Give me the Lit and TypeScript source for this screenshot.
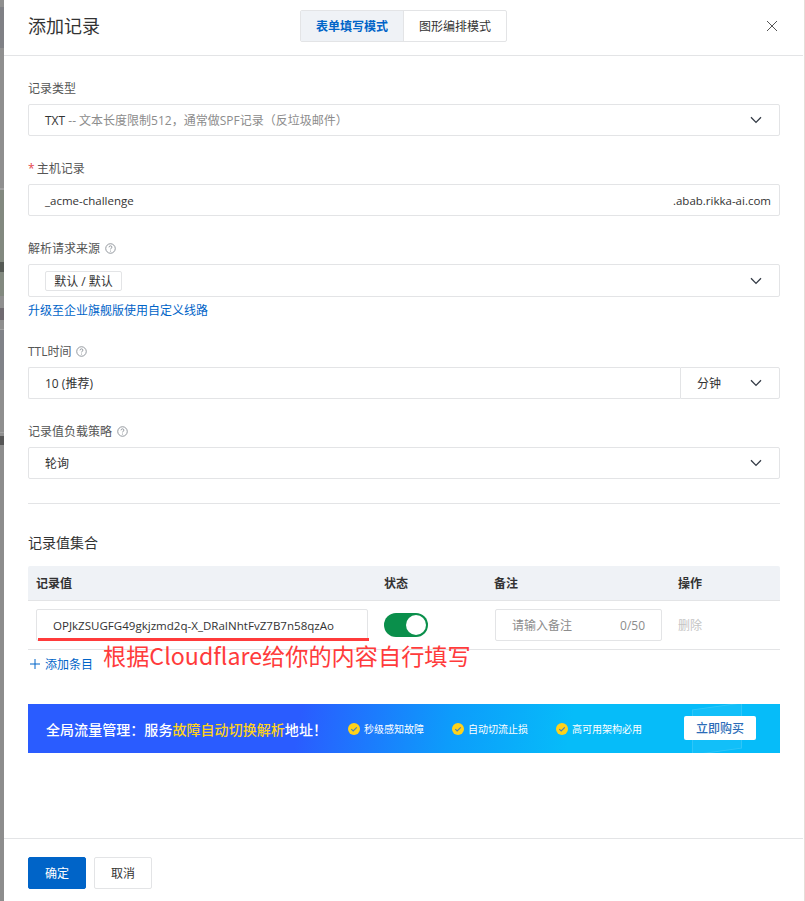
import { LitElement, html, css } from "lit";
import { customElement } from "lit/decorators.js";

const chevron = html`<svg class="chev" viewBox="0 0 12 8" width="12" height="8"><path d="M1 1.2 6 6.4 11 1.2" fill="none" stroke="#333a45" stroke-width="1.3"/></svg>`;
const help = html`<svg class="help" viewBox="0 0 12 12" width="11" height="11"><circle cx="6" cy="6" r="5.2" fill="none" stroke="#8a8f96" stroke-width="1"/><path d="M4.4 4.7C4.4 3.7 5.1 3.1 6 3.1s1.6.6 1.6 1.4c0 1.2-1.6 1.2-1.6 2.5" fill="none" stroke="#8a8f96" stroke-width="1"/><circle cx="6" cy="8.8" r=".6" fill="#8a8f96"/></svg>`;
const check = html`<svg class="check" viewBox="0 0 12 12" width="12" height="12"><circle cx="6" cy="6" r="6" fill="#ffd21a"/><path d="M3.3 6.1 5.2 8 8.8 4.3" fill="none" stroke="#4a7fb5" stroke-width="1.1"/></svg>`;

@customElement("app-root")
export class AppRoot extends LitElement {
  static styles = css`
    :host { display: block; width: 805px; height: 901px; overflow: hidden; background: #fff;
      font-family: "Open Sans", "Noto Sans CJK SC", sans-serif; font-size: 12px; color: #333; }
    * { box-sizing: border-box; }
    .page { display: flex; height: 901px; position: relative; }
    .strip { width: 4px; flex: none;
      background: linear-gradient(180deg,
        #8f8f8f 0 7px, #7f8085 7px 48px, #8f8f8f 48px 188px, #a0a0a0 188px 190px,
        #82897f 190px 262px, #555a55 262px 272px, #82897f 272px 296px, #8f8f8f 296px 308px,
        #6f6a70 308px 320px, #8f8f8f 320px 329px, #a0a0a0 329px 330px, #808288 330px 380px,
        #8f8f8f 380px 432px, #a0a0a0 432px 433px, #8f8f8f 433px 436px, #565656 436px 445px,
        #8d8d8d 445px 901px); }
    .panel { flex: 1; display: flex; flex-direction: column; min-width: 0; }
    .edge { width: 2px; flex: none; background: #fff; border-right: 1px solid #e6dcd8; }

    .head { height: 56px; flex: none; border-bottom: 1px solid #e3e4e6; position: relative;
      display: flex; align-items: center; justify-content: center; padding: 0 0 4px; }
    .title { position: absolute; left: 24px; top: 13px; font-size: 18px; line-height: 26px; color: #333; }
    .tabs { display: flex; height: 32px; border: 1px solid #e3e4e6; border-radius: 2px; margin-left: 0; margin-top: 1px; }
    .tab { width: 102px; display: flex; align-items: center; justify-content: center; font-size: 12px; color: #333; }
    .tab.on { width: 103px; background: #eff2f6; color: #0064c8; font-weight: 700; border-right: 1px solid #e3e4e6; }
    .close { position: absolute; left: 762px; top: 20px; }

    .body { flex: 1; padding: 22px 23px 0 24px; }
    .field { margin-bottom: 22px; }
    .field.tight { margin-bottom: 21px; }
    .label { height: 20px; line-height: 20px; padding-top: 1px; margin-bottom: 6px; font-size: 12px; color: #555; display: flex; align-items: center; gap: 5px; }
    .req { color: #e5484d; margin-right: -1px; }
    .ctl { height: 32px; border: 1px solid #e3e4e6; border-radius: 2px; display: flex; align-items: center; padding: 0 17px 0 16px; font-size: 12px; color: #333; background: #fff; }
    .ctl.tall { height: 33px; }
    .grow { flex: 1; min-width: 0; }
    .muted { color: #8c8c8c; }
    .latin { font-size: 11.5px; }
    .suffix { color: #333; margin-right: -9px; font-size: 11.5px; }
    .chip { height: 20px; border: 1px solid #e3e4e6; border-radius: 2px; padding: 0 8px; display: inline-flex; align-items: center; font-size: 12px; margin-top: 1px; width: 77px; white-space: nowrap; justify-content: center; }
    .link { display: block; height: 20px; line-height: 20px; padding-top: 1px; margin-top: 3px; color: #0064c8; font-size: 12px; }
    .ttl { display: flex; }
    .ttl .ctl.a { flex: 1; border-right: none; border-radius: 2px 0 0 2px; }
    .ttl .ctl.b { width: 100px; border-radius: 0 2px 2px 0; }
    .divider { height: 1px; background: #e3e4e6; margin: 24px 0 29px; }
    .section { height: 20px; line-height: 20px; font-size: 14px; color: #333; margin-bottom: 13px; }

    .grid { display: grid; grid-template-columns: 356px 110px 184px 102px; }
    .thead { height: 35px; background: #eff2f6; border-bottom: 1px solid #e3e4e6; border-radius: 2px 2px 0 0; align-items: center; font-weight: 700; font-size: 12px; color: #333; }
    .thead > div:first-child { padding-left: 8px; }
    .trow { height: 49px; border-bottom: 1px solid #e3e4e6; align-items: center; }
    .cell-input { width: 332px; height: 32px; margin-left: 8px; border: 1px solid #e3e4e6; border-radius: 2px; display: flex; align-items: center; padding-left: 16px; font-size: 11.55px; color: #333; white-space: nowrap; }
    .switch { width: 44px; height: 24px; border-radius: 12px; background: #0a8f4b; position: relative; }
    .switch::after { content: ""; position: absolute; right: 2px; top: 2px; width: 20px; height: 20px; border-radius: 50%; background: #fff; }
    .note { width: 167px; margin-left: 1px; height: 32px; border: 1px solid #e3e4e6; border-radius: 2px; display: flex; align-items: center; justify-content: space-between; padding: 0 16px; color: #8c8c8c; font-size: 12px; }
    .del { color: #c4c4c4; font-size: 12px; }
    .add { display: flex; align-items: center; gap: 5px; height: 20px; margin-top: 4px; padding-left: 2px; color: #0064c8; font-size: 12px; }

    .banner { margin-top: 30px; height: 49px; display: flex; align-items: center; position: relative; overflow: hidden; color: #fff;
      background: linear-gradient(100deg, #2a5cff 0%, #2a5cff 36%, #0d9cfb 56%, #06bcf9 72%, #06bcf9 100%); padding-left: 18px; }
    .btxt { font-size: 14px; font-weight: 500; letter-spacing: 0.05px; white-space: nowrap; width: 302px; flex: none; }
    .btxt b { color: #ffd21a; font-weight: 500; }
    .perk { display: flex; align-items: center; gap: 4px; font-size: 10px; white-space: nowrap; flex: none; }
    .p1 { width: 104px; } .p2 { width: 104px; }
    .p3 { width: 128px; }
    .buy { flex: none; width: 72px; height: 24px; background: #fff; border-radius: 2px; color: #2a6cb8; display: flex; align-items: center; justify-content: center; font-size: 12px; font-weight: 500; margin-top: -1px; position: relative; }
    .deco { position: absolute; left: 664px; top: 2px; width: 50px; height: 46px; border: 1px solid rgba(255,255,255,.12); background: rgba(255,255,255,.05); transform: skewY(-8deg); }

    .foot { height: 63px; flex: none; border-top: 1px solid #e3e4e6; padding: 18px 0 0 24px; display: flex; gap: 8px; align-items: flex-start; }
    .btn { width: 58px; height: 32px; border-radius: 2px; display: flex; align-items: center; justify-content: center; font-size: 12px; border: 1px solid #e3e4e6; color: #333; background: #fff; }
    .btn.pri { background: #0064c8; border-color: #0064c8; color: #fff; }

    .red-line { position: absolute; left: 38px; top: 638px; width: 331px; height: 3px; background: #ff3b3b; }
    .red-text { position: absolute; left: 103px; top: 640px; font-size: 23.2px; line-height: 30px; color: #ff3b3b; font-family: "Noto Sans CJK SC", sans-serif; white-space: nowrap; }
  `;

  render() {
    return html`
      <div class="page">
        <div class="strip"></div>
        <div class="panel">
          <div class="head">
            <div class="title">添加记录</div>
            <div class="tabs">
              <div class="tab on">表单填写模式</div>
              <div class="tab">图形编排模式</div>
            </div>
            <svg class="close" viewBox="0 0 12 12" width="12" height="12"><path d="M1 1 11 11M11 1 1 11" stroke="#555" stroke-width="1" fill="none"/></svg>
          </div>
          <div class="body">
            <div class="field">
              <div class="label">记录类型</div>
              <div class="ctl"><span class="grow"><span>TXT</span> <span class="muted">-- 文本长度限制512，通常做SPF记录（反垃圾邮件）</span></span>${chevron}</div>
            </div>
            <div class="field">
              <div class="label"><span><span class="req">*</span> 主机记录</span></div>
              <div class="ctl"><span class="grow latin">_acme-challenge</span><span class="suffix">.abab.rikka-ai.com</span></div>
            </div>
            <div class="field tight">
              <div class="label">解析请求来源 ${help}</div>
              <div class="ctl tall"><span class="grow"><span class="chip">默认 / 默认</span></span>${chevron}</div>
              <a class="link">升级至企业旗舰版使用自定义线路</a>
            </div>
            <div class="field">
              <div class="label">TTL时间 ${help}</div>
              <div class="ttl">
                <div class="ctl a"><span class="grow">10 (推荐)</span></div>
                <div class="ctl b"><span class="grow">分钟</span>${chevron}</div>
              </div>
            </div>
            <div class="field">
              <div class="label">记录值负载策略 ${help}</div>
              <div class="ctl"><span class="grow">轮询</span>${chevron}</div>
            </div>
            <div class="divider"></div>
            <div class="section">记录值集合</div>
            <div class="grid thead"><div>记录值</div><div>状态</div><div>备注</div><div>操作</div></div>
            <div class="grid trow">
              <div><div class="cell-input">OPJkZSUGFG49gkjzmd2q-X_DRaINhtFvZ7B7n58qzAo</div></div>
              <div><div class="switch"></div></div>
              <div><div class="note"><span>请输入备注</span><span>0/50</span></div></div>
              <div class="del">删除</div>
            </div>
            <div class="add"><svg viewBox="0 0 10 10" width="10" height="10"><path d="M5 0V10M0 5H10" stroke="#0064c8" stroke-width="1"/></svg>添加条目</div>
            <div class="banner">
              <div class="deco"></div>
              <div class="btxt">全局流量管理：服务<b>故障自动切换解析</b>地址！</div>
              <div class="perk p1">${check}秒级感知故障</div>
              <div class="perk p2">${check}自动切流止损</div>
              <div class="perk p3">${check}高可用架构必用</div>
              <div class="buy">立即购买</div>
            </div>
          </div>
          <div class="foot">
            <div class="btn pri">确定</div>
            <div class="btn">取消</div>
          </div>
        </div>
        <div class="edge"></div>
        <div class="red-line"></div>
        <div class="red-text">根据Cloudflare给你的内容自行填写</div>
      </div>
    `;
  }
}
